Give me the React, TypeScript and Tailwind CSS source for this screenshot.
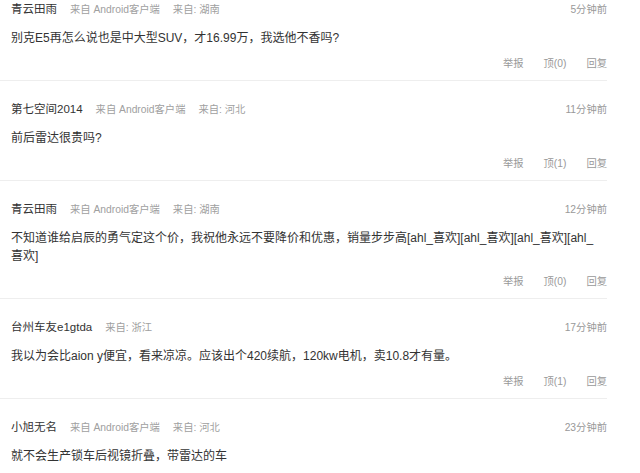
import React from "react";

type Comment = {
  name: string;
  client?: string;
  region: string;
  time: string;
  text: string;
  up: number;
};

const comments: Comment[] = [
  {
    name: "青云田雨",
    client: "来自 Android客户端",
    region: "湖南",
    time: "5分钟前",
    text: "别克E5再怎么说也是中大型SUV，才16.99万，我选他不香吗?",
    up: 0,
  },
  {
    name: "第七空间2014",
    client: "来自 Android客户端",
    region: "河北",
    time: "11分钟前",
    text: "前后雷达很贵吗?",
    up: 1,
  },
  {
    name: "青云田雨",
    client: "来自 Android客户端",
    region: "湖南",
    time: "12分钟前",
    text: "不知道谁给启辰的勇气定这个价，我祝他永远不要降价和优惠，销量步步高[ahl_喜欢][ahl_喜欢][ahl_喜欢][ahl_喜欢]",
    up: 0,
  },
  {
    name: "台州车友e1gtda",
    region: "浙江",
    time: "17分钟前",
    text: "我以为会比aion y便宜，看来凉凉。应该出个420续航，120kw电机，卖10.8才有量。",
    up: 1,
  },
  {
    name: "小旭无名",
    client: "来自 Android客户端",
    region: "河北",
    time: "23分钟前",
    text: "就不会生产锁车后视镜折叠，带雷达的车",
    up: 0,
  },
];

function CommentItem({ c, first }: { c: Comment; first: boolean }) {
  return (
    <div className={`${first ? "pt-[2px]" : "pt-[21px]"} pb-[9px] border-b border-[#eeeeee]`}>
      <div className="pl-[11px] flex items-center h-4">
        <span className="text-[11.5px] text-[#333333]">{c.name}</span>
        {c.client && <span className="ml-[13px] text-[10.3px] text-[#a0a0a0]">{c.client}</span>}
        <span className="ml-[13px] text-[10.3px] text-[#a0a0a0]">来自: {c.region}</span>
        <span className="ml-auto text-[10.3px] text-[#999999]">{c.time}</span>
      </div>
      <p className="pl-[11px] pr-[8px] mt-[11px] text-[12px] leading-[18px] text-[#333333] break-all">{c.text}</p>
      <div className="mt-[10px] h-[14px] flex items-center justify-end gap-[20px] text-[10.3px] text-[#999999]">
        <span>举报</span>
        <span>顶({c.up})</span>
        <span>回复</span>
      </div>
    </div>
  );
}

export default function App() {
  return (
    <div
      className="w-[640px] h-[473px] overflow-hidden bg-white"
      style={{ fontFamily: '"Liberation Sans", "Noto Sans CJK SC", sans-serif' }}
    >
      <div className="w-[607px]">
        {comments.map((c, i) => (
          <CommentItem key={i} c={c} first={i === 0} />
        ))}
      </div>
    </div>
  );
}
